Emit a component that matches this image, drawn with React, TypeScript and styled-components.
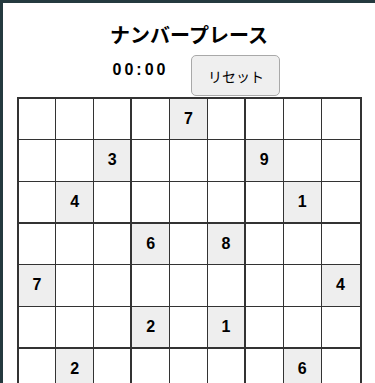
import React from "react";
import styled, { createGlobalStyle } from "styled-components";

const Global = createGlobalStyle`
  html, body { margin: 0; padding: 0; }
  body {
    background: #243a3f;
    font-family: "Liberation Sans", Arial, "Noto Sans CJK JP", sans-serif;
  }
`;

const Frame = styled.div`
  margin: 3px 0 0 3px;
  background: #ffffff;
  min-height: 380px;
  display: flex;
  flex-direction: column;
  align-items: center;
  padding-top: 21px;
`;

const Title = styled.h1`
  margin: 0;
  font-family: "Liberation Sans", "Noto Sans CJK JP", sans-serif;
  font-size: 20px;
  line-height: 24px;
  font-weight: bold;
  color: #000;
`;

const Controls = styled.div`
  display: flex;
  align-items: flex-start;
  margin-top: 7px;
  margin-left: 15px;
`;

const Timer = styled.span`
  font-family: "Liberation Sans", Arial, sans-serif;
  font-size: 16px;
  line-height: 18px;
  font-weight: bold;
  letter-spacing: 3px;
  margin-top: 6px;
  margin-right: 23px;
  color: #000;
`;

const ResetButton = styled.button`
  width: 89px;
  height: 41px;
  border: 1px solid #a9a9a9;
  border-radius: 5px;
  background: #efefef;
  font-family: "Noto Sans CJK JP", sans-serif;
  font-size: 14px;
  line-height: 16px;
  color: #000;
  padding: 0;
  cursor: pointer;
`;

const Board = styled.div`
  margin-top: 1px;
  width: 345px;
  box-sizing: border-box;
  border: 2px solid #333;
  display: grid;
  grid-template-columns: repeat(9, 1fr);
`;

const Cell = styled.div<{ $given: boolean; $right: number; $bottom: number }>`
  box-sizing: content-box;
  height: 40.33px;
  border-right: ${(p) => p.$right}px solid #333;
  border-bottom: ${(p) => p.$bottom}px solid #333;
  background: ${(p) => (p.$given ? "#eeeeee" : "#ffffff")};
  display: flex;
  align-items: center;
  justify-content: center;
  font-family: "Liberation Sans", Arial, sans-serif;
  font-weight: bold;
  font-size: 16px;
  color: #000;
`;

const puzzle: number[][] = [
  [0, 0, 0, 0, 7, 0, 0, 0, 0],
  [0, 0, 3, 0, 0, 0, 9, 0, 0],
  [0, 4, 0, 0, 0, 0, 0, 1, 0],
  [0, 0, 0, 6, 0, 8, 0, 0, 0],
  [7, 0, 0, 0, 0, 0, 0, 0, 4],
  [0, 0, 0, 2, 0, 1, 0, 0, 0],
  [0, 2, 0, 0, 0, 0, 0, 6, 0],
  [0, 0, 0, 0, 0, 0, 0, 0, 0],
  [0, 0, 0, 0, 0, 0, 0, 0, 0],
];

const edge = (i: number) => (i === 8 ? 0 : i === 2 || i === 5 ? 2 : 1);

export default function App() {
  return (
    <>
      <Global />
      <Frame>
        <Title>ナンバープレース</Title>
        <Controls>
          <Timer>00:00</Timer>
          <ResetButton>リセット</ResetButton>
        </Controls>
        <Board>
          {puzzle.map((row, r) =>
            row.map((v, c) => (
              <Cell key={`${r}-${c}`} $given={v !== 0} $right={edge(c)} $bottom={edge(r)}>
                {v !== 0 ? v : ""}
              </Cell>
            ))
          )}
        </Board>
      </Frame>
    </>
  );
}
